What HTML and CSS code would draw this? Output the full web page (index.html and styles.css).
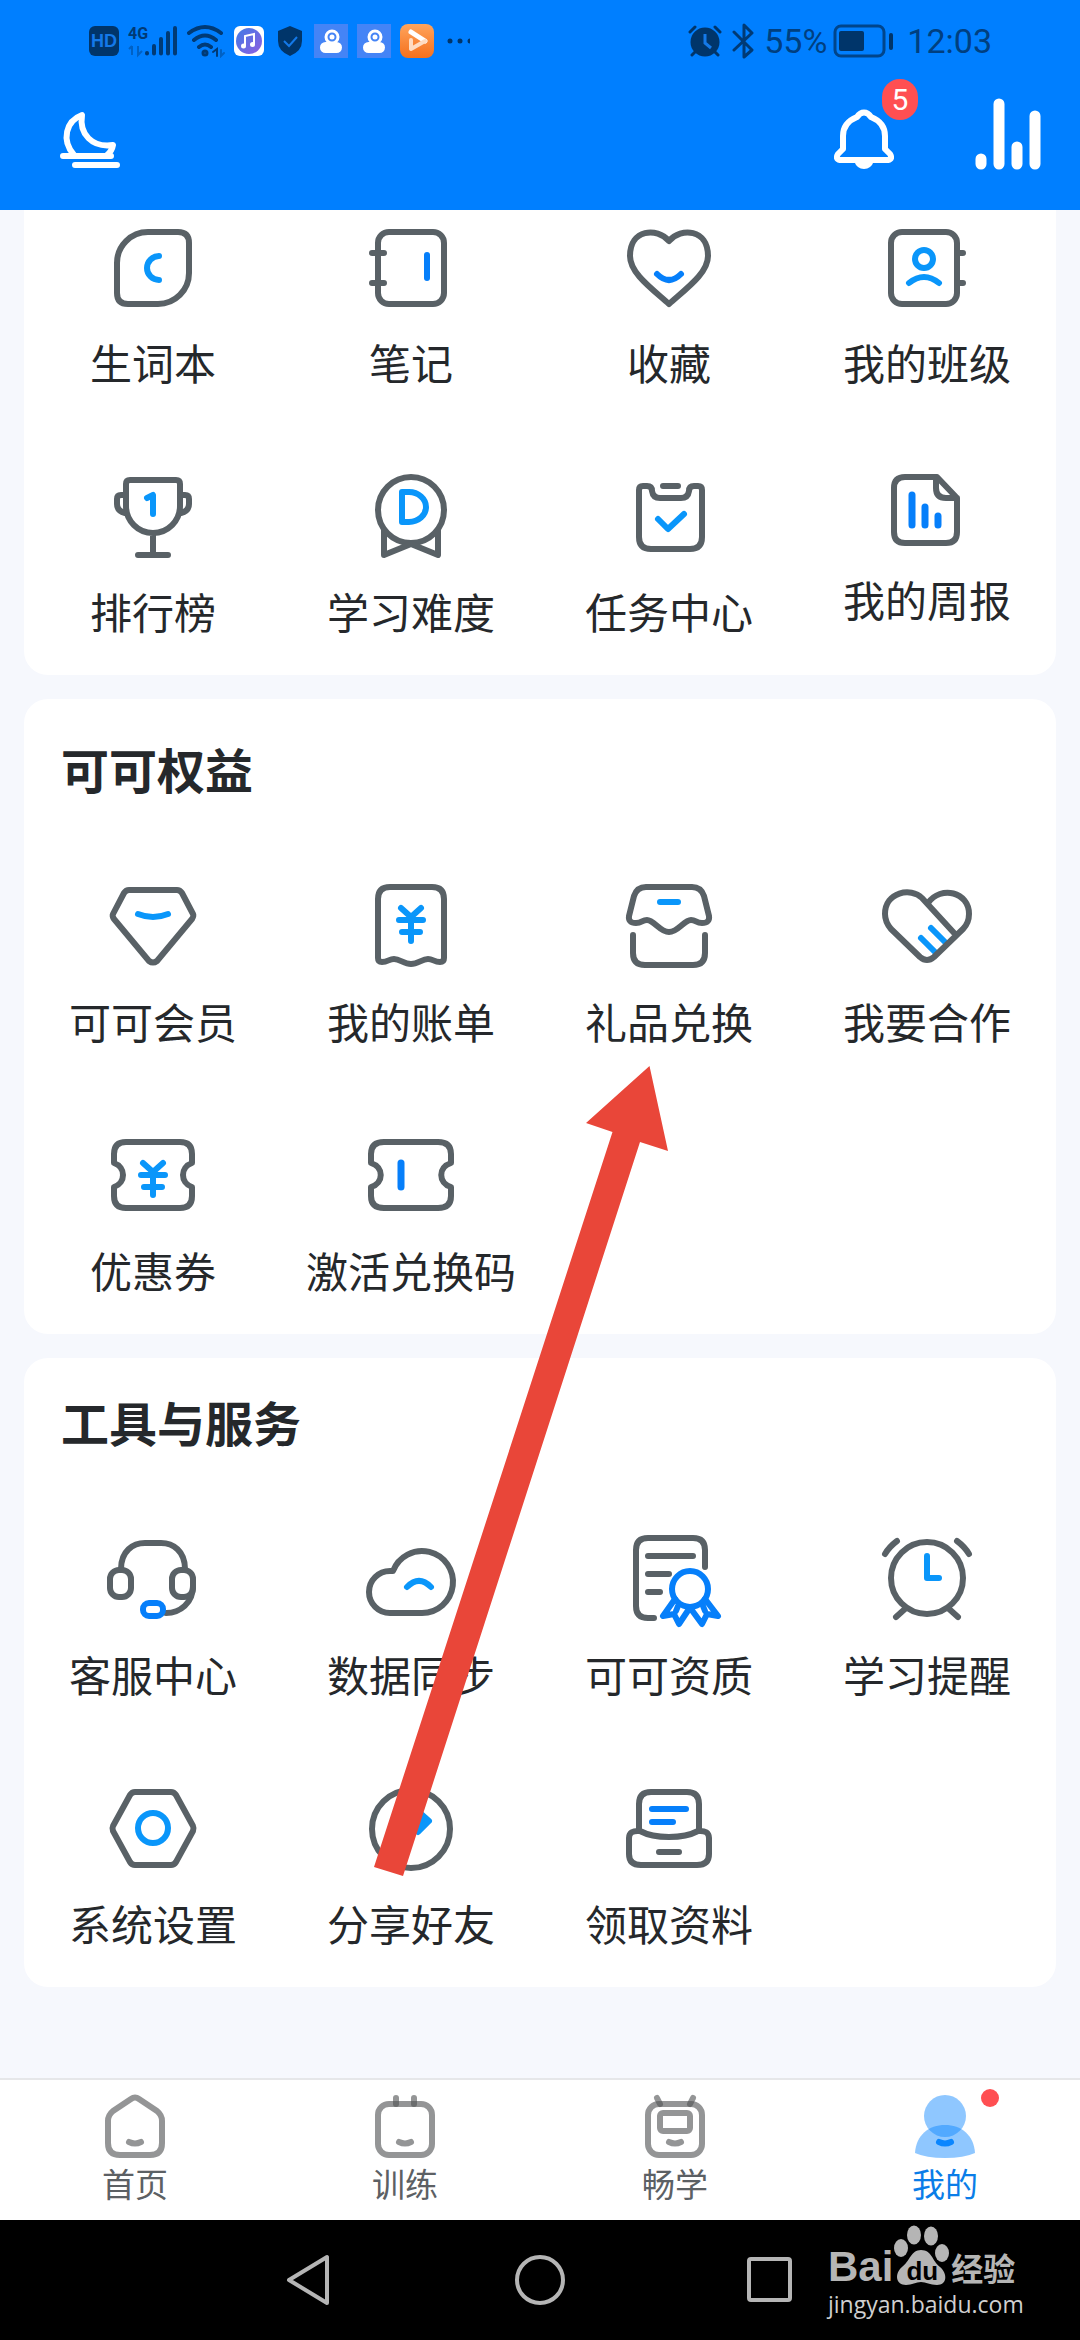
FILE: index.html
```html
<!DOCTYPE html>
<html lang="zh-CN">
<head>
<meta charset="utf-8">
<meta name="viewport" content="width=device-width, initial-scale=1">
<title>我的</title>
<link rel="stylesheet" href="styles.css">
</head>
<body>
<header class="header">
  <div class="status">
    <div class="status-left">
      <span class="hd">HD</span>
      <svg class="signal" width="50" height="34" viewBox="0 0 50 34"><text class="net" x="0" y="15">4G</text><g stroke="#003a75" stroke-width="4" stroke-linecap="round"><path d="M19 29v.5M26 22v7.500M33 15v14.500M40 9v20.500M47 4v25.500"/></g><path d="M4 22v9M1 25l3-3M10 22v9l4-4" fill="none" stroke="#0061c4" stroke-width="2"/></svg>
      <svg class="wifi" width="38" height="34" viewBox="0 0 38 34" fill="none" stroke="#003a75" stroke-width="4" stroke-linecap="round"><path d="M2 9Q18-3 34 9M7 16Q18 7 29 16M12 23Q18 18 24 23"/><circle cx="18" cy="29" r="1.500"/><path d="M26 28l4-3v7" stroke-width="2"/><path d="M34 26v6l3-3" stroke="#0061c4" stroke-width="2"/></svg>
      <svg class="music" width="30" height="30" viewBox="0 0 30 30"><defs><linearGradient id="mus" x1="0" y1="0" x2="1" y2="1"><stop offset="0" stop-color="#3f7be6"/><stop offset="1" stop-color="#8f5fe0"/></linearGradient></defs><rect width="30" height="30" rx="6" fill="#fff"/><circle cx="15" cy="15" r="13" fill="url(#mus)"/><path d="M11 20V10l9-2v10" fill="none" stroke="#fff" stroke-width="2"/><circle cx="9.500" cy="20" r="2.500" fill="#fff"/><circle cx="18.500" cy="18.500" r="2.500" fill="#fff"/></svg>
      <svg class="shield" width="26" height="32" viewBox="0 0 26 32"><path d="M13 1l12 5v10q0 10-12 15Q1 26 1 16V6z" fill="#00356a"/><path d="M7 16l5 5 8-9" fill="none" stroke="#1479e8" stroke-width="2"/></svg>
      <svg class="cam" width="34" height="34" viewBox="0 0 34 34"><rect width="34" height="34" fill="#4484f6"/><circle cx="18" cy="13" r="6" fill="none" stroke="#fff" stroke-width="3"/><circle cx="18" cy="13" r="2.500" fill="#fff"/><rect x="6" y="18" width="22" height="11" rx="5.500" fill="#fff"/></svg>
      <svg class="cam" width="34" height="34" viewBox="0 0 34 34"><rect width="34" height="34" fill="#4484f6"/><circle cx="18" cy="13" r="6" fill="none" stroke="#fff" stroke-width="3"/><circle cx="18" cy="13" r="2.500" fill="#fff"/><rect x="6" y="18" width="22" height="11" rx="5.500" fill="#fff"/></svg>
      <svg class="player" width="34" height="34" viewBox="0 0 34 34"><defs><linearGradient id="org" x1="0" y1="0" x2="0" y2="1"><stop offset="0" stop-color="#ffa45c"/><stop offset="1" stop-color="#f5701d"/></linearGradient></defs><rect width="34" height="34" rx="8" fill="url(#org)"/><path d="M11 8L25 17" stroke="#fff" stroke-width="5" stroke-linecap="round"/><path d="M25 17L11 25v-9" fill="none" stroke="#ffdcc2" stroke-width="4" stroke-linecap="round" stroke-linejoin="round"/></svg>
      <svg class="more" width="24" height="34" viewBox="0 0 24 34" fill="#00356a"><circle cx="3" cy="17" r="2.500"/><circle cx="13" cy="17" r="2.500"/><path d="M23 14.500q-2.500 0-2.500 2.500t2.500 2.500z"/></svg>
    </div>
    <div class="status-right">
      <svg width="34" height="34" viewBox="0 0 34 34"><g stroke="#00356a" stroke-width="3" stroke-linecap="round"><path d="M2 8l5-5M32 8l-5-5M4 31l5-5M30 31l-5-5"/></g><circle cx="17" cy="18" r="14.500" fill="#00356a"/><path d="M17 10v9l6 5" fill="none" stroke="#1479e8" stroke-width="3"/></svg>
      <svg class="bt" width="22" height="36" viewBox="0 0 22 36" fill="none" stroke="#003a75" stroke-width="3" stroke-linejoin="round" stroke-linecap="round"><path d="M2 9l18 18-8 7V2l8 8L2 27"/></svg>
      <span class="pct">55%</span>
      <svg class="battery" width="60" height="34" viewBox="0 0 60 34"><rect x="2" y="2" width="49" height="30" rx="6" fill="none" stroke="#00458b" stroke-width="3"/><rect x="6" y="7" width="25" height="20" rx="2" fill="#00356a"/><rect x="56" y="9" width="4" height="17" rx="2" fill="#00356a"/></svg>
      <span class="time">12:03</span>
    </div>
  </div>
  <div class="appbar">
    <button class="icon-btn" aria-label="夜间模式"><svg width="60" height="60" viewBox="0 0 60 60" fill="none" stroke="#fff" stroke-width="6" stroke-linecap="round" stroke-linejoin="round"><path d="M14 45C1 30 6 11 22 5C19 24 32 38 53 35Q52 41 47 45M3 46H51M15 55H57"/></svg></button>
    <div class="actions">
      <button class="icon-btn" aria-label="消息"><svg width="60" height="62" viewBox="0 0 60 62"><path d="M30 4.500Q26 4.500 23 9C13 13 9 20 9 28V41L4 46Q1 51 6 52H54Q59 51 56 46L51 41V28C51 20 47 13 37 9Q34 4.500 30 4.500Z" fill="none" stroke="#fff" stroke-width="6" stroke-linejoin="round"/><path d="M20 53H40Q37 61 30 61Q23 61 20 53Z" fill="#fff"/></svg><span class="badge">5</span></button>
      <button class="icon-btn" aria-label="学习数据"><svg width="66" height="72" viewBox="0 0 66 72" stroke="#fff" stroke-width="11" stroke-linecap="round"><path d="M6 61V66M24 6V66M42 49V66M60 18V66"/></svg></button>
    </div>
  </div>
</header>

<main class="content">
  <section class="card card-top">
    <div class="grid">
      <a class="tile" href="#"><svg class="icon" viewBox="0 0 96 96"><path d="M43 13H73Q84 13 84 24V54A31 31 0 0 1 53 85H23Q12 85 12 74V44A31 31 0 0 1 43 13Z"/><path class="b" d="M54 37A12 12 0 0 0 54 61"/></svg><span>生词本</span></a>
      <a class="tile" href="#"><svg class="icon" viewBox="0 0 96 96"><rect x="15" y="13" width="66" height="72" rx="11"/><path d="M9 34H21M9 64H21"/><path class="b2" d="M64 36V59"/></svg><span>笔记</span></a>
      <a class="tile" href="#"><svg class="icon" viewBox="0 0 96 96"><path d="M48 22C36 8 9 10 9 37C9 54 30 69 48 85C66 69 87 54 87 37C87 10 60 8 48 22Z"/><path class="b2" d="M36 55Q48 67 60 55"/></svg><span>收藏</span></a>
      <a class="tile" href="#"><svg class="icon" viewBox="0 0 96 96"><rect x="12" y="13" width="66" height="72" rx="11"/><path d="M80 34H84M80 64H84"/><circle class="b" cx="45" cy="40" r="9"/><path class="b" d="M30 64Q45 52 60 64"/></svg><span>我的班级</span></a>
      <a class="tile" href="#"><svg class="icon" viewBox="0 0 96 96"><path d="M25 12H71Q75 12 75 16V38A27 27 0 0 1 21 38V16Q21 12 25 12ZM21 27H16Q12 27 12 31V36Q12 43 20 45M75 27H80Q84 27 84 31V36Q84 43 76 45M48 65V87M33 87H63"/><path class="b" d="M42 30L48 27V46"/></svg><span>排行榜</span></a>
      <a class="tile" href="#"><svg class="icon" viewBox="0 0 96 96"><circle cx="48" cy="42" r="33"/><path d="M21 62V87L48 76L75 87V62"/><path class="b" d="M39 24H46A17 15 0 0 1 46 54H39Z"/></svg><span>学习难度</span></a>
      <a class="tile" href="#"><svg class="icon" viewBox="0 0 96 96"><path d="M18 22Q18 18 22 18H26Q31 18 31 23Q32 30 39 30H60Q67 30 68 23Q68 18 73 18H77Q81 18 81 22V69Q81 81 69 81H30Q18 81 18 69ZM42 18H57"/><path class="b" d="M37 51L47 61L63 46"/></svg><span>任务中心</span></a>
      <a class="tile" href="#"><svg class="icon icon-short" viewBox="0 0 96 84"><path d="M26 9H58L78 30V64Q78 75 67 75H26Q15 75 15 64V20Q15 9 26 9ZM57 9V20Q57 30 67 30H78"/><path class="b2 thick" d="M33 27V57M46 39V57M59 48V57"/></svg><span>我的周报</span></a>
    </div>
  </section>

  <section class="card">
    <h2>可可权益</h2>
    <div class="grid">
      <a class="tile" href="#"><svg class="icon" viewBox="0 0 96 96"><path d="M24 12H72Q75 12 77 15L88 36Q89 38 87 41L52 83Q48 86 44 83L9 41Q7 38 8 36L19 15Q21 12 24 12Z"/><path class="b" d="M33 36Q48 42 63 36"/></svg><span>可可会员</span></a>
      <a class="tile" href="#"><svg class="icon" viewBox="0 0 96 96"><path d="M27 9H69Q81 9 81 21V80Q81 84 77 84C71 84 70 81 65 81C59 81 55 86 48 86C41 86 37 81 31 81C26 81 25 84 19 84Q15 84 15 80V21Q15 9 27 9Z"/><path class="b" d="M38 30L48 39L58 30M48 39V63M36 42H60M39 54H57"/></svg><span>我的账单</span></a>
      <a class="tile" href="#"><svg class="icon" viewBox="0 0 96 96"><path d="M25 9H71Q80 9 83 18L88 38Q89 45 81 45C75 45 75 42 70 42C63 42 57 54 48 54C39 54 33 42 26 42C21 42 21 45 15 45Q7 45 8 38L13 18Q16 9 25 9ZM12 57V75Q12 87 24 87H72Q84 87 84 75V57"/><path class="b" d="M39 24H57"/></svg><span>礼品兑换</span></a>
      <a class="tile" href="#"><svg class="icon" viewBox="0 0 96 96"><path class="b" d="M52 50L67 65M42 60L57 75"/><path d="M76 56L43 20C32 9 6 14 6 36Q6 44 12 51L41 79Q48 85 55 79L84 51Q90 45 90 36C90 14 62 7 49 25"/></svg><span>我要合作</span></a>
      <a class="tile" href="#"><svg class="icon" viewBox="0 0 96 96"><path d="M21 15H75Q87 15 87 27V36C75 40 75 56 87 60V69Q87 81 75 81H21Q9 81 9 69V60C21 56 21 40 9 36V27Q9 15 21 15Z"/><path class="b" d="M38 36L48 45L58 36M48 45V68M36 48H60M39 60H57"/></svg><span>优惠券</span></a>
      <a class="tile" href="#"><svg class="icon" viewBox="0 0 96 96"><path d="M21 15H75Q88 15 88 27V36C75 40 75 56 88 60V69Q88 81 75 81H21Q8 81 8 69V60C21 56 21 40 8 36V27Q8 15 21 15Z"/><path class="b2 thick" d="M38 36V60"/></svg><span>激活兑换码</span></a>
    </div>
  </section>

  <section class="card card-tools">
    <h2>工具与服务</h2>
    <div class="grid">
      <a class="tile" href="#"><svg class="icon" viewBox="0 0 96 96"><path d="M16 38C16 20 28 12 40 12H56C68 12 80 20 80 38M88 55C88 72 75 82 61 82"/><rect x="5" y="39" width="21" height="27" rx="9"/><rect x="67" y="39" width="21" height="27" rx="9"/><rect class="b2" x="38" y="72" width="20" height="13" rx="6"/></svg><span>客服中心</span></a>
      <a class="tile" href="#"><svg class="icon" viewBox="0 0 96 96"><path d="M27 82A21 21 0 0 1 27 40H30A31 31 0 1 1 59 82Z"/><path class="b" d="M44 56Q56 44 68 56"/></svg><span>数据同步</span></a>
      <a class="tile" href="#"><svg class="icon" viewBox="0 0 96 96"><path d="M84 36V19Q84 7 72 7H27Q15 7 15 19V75Q15 87 27 87H33M27 25H72M27 43H48M27 61H39"/><circle class="b2" cx="69" cy="58" r="18"/><path class="b2" d="M54 68L42 85L53 83L58 93L68 78M84 68L97 85L86 83L81 93L70 78M57 75L55 80M82 75L84 80"/></svg><span>可可资质</span></a>
      <a class="tile" href="#"><svg class="icon" viewBox="0 0 96 96"><circle cx="48" cy="47" r="36"/><path d="M6 23Q10 16 18 10M78 10Q86 16 90 23M27 77L17 86M69 77L79 86"/><path class="b" d="M48 25V47H60"/></svg><span>学习提醒</span></a>
      <a class="tile" href="#"><svg class="icon" viewBox="0 0 96 96"><path d="M30 12H66Q69 12 71 15L88 46Q89 48 88 51L71 82Q69 85 66 85H30Q27 85 25 82L8 51Q7 48 8 46L25 15Q27 12 30 12Z"/><circle class="b" cx="48" cy="48" r="15"/></svg><span>系统设置</span></a>
      <a class="tile" href="#"><svg class="icon" viewBox="0 0 96 96"><circle cx="48" cy="49" r="39"/><path class="b solid" d="M57 33L66 41L55 52Z"/><path class="b" d="M57 41H46Q33 43 32 58"/></svg><span>分享好友</span></a>
      <a class="tile" href="#"><svg class="icon" viewBox="0 0 96 96"><path d="M18 50V24Q18 12 30 12H66Q78 12 78 24V50M19 51C34 59 62 59 77 51Q88 50 88 58V74Q88 85 76 85H20Q8 85 8 74V58Q8 50 19 51ZM38 72H58"/><path class="b2" d="M31 29H65M31 42H52"/></svg><span>领取资料</span></a>
    </div>
  </section>

  <svg class="arrow" width="294" height="810" viewBox="0 0 294 810" aria-hidden="true"><path d="M275.500 0L294 85L266 76L29 810L0 801L238.500 66L212 57Z" fill="#e94639"/></svg>
</main>

<nav class="tabs">
  <a class="tab" href="#"><svg class="tab-icon" viewBox="0 0 66 66"><path d="M29 7Q33 4 37 7L55 19Q60 23 60 29V51Q60 63 48 63H18Q6 63 6 51V29Q6 23 11 19Z"/><path d="M27 50Q33 53 39 50"/></svg><span>首页</span></a>
  <a class="tab" href="#"><svg class="tab-icon" viewBox="0 0 66 66"><rect x="6" y="12" width="54" height="51" rx="11"/><path d="M24 6V12"/><path d="M42 6V12"/><path d="M27 50Q33 53 39 50"/></svg><span>训练</span></a>
  <a class="tab" href="#"><svg class="tab-icon" viewBox="0 0 66 66"><rect x="6" y="12" width="54" height="51" rx="11"/><path d="M15 6L18 12"/><path d="M51 6L48 12"/><rect x="18" y="21" width="30" height="18" rx="3"/><path d="M27 50Q33 53 39 50"/></svg><span>畅学</span></a>
  <a class="tab active" href="#"><span class="tab-pic"><svg class="tab-me" width="66" height="66" viewBox="0 0 66 66"><circle cx="33" cy="24" r="21" fill="#0a86ff" fill-opacity=".46"/><path d="M3 61C4 43 17 33 33 33C49 33 62 43 63 61Q52 66 33 66Q14 66 3 61Z" fill="#0a86ff" fill-opacity=".46"/><path d="M27 50Q33 53 39 50" fill="none" stroke="#0a86ff" stroke-width="6" stroke-linecap="round"/></svg><i class="dot"></i></span><span>我的</span></a>
</nav>

<footer class="sysnav">
  <button class="sys-btn" aria-label="返回"><svg width="56" height="56" viewBox="0 0 56 56"><path d="M8 28L46 5V51Z"/></svg></button>
  <button class="sys-btn" aria-label="主屏幕"><svg width="56" height="56" viewBox="0 0 56 56"><circle cx="28" cy="28" r="23"/></svg></button>
  <button class="sys-btn" aria-label="最近任务"><svg width="56" height="56" viewBox="0 0 56 56"><rect x="6" y="7" width="41" height="41" rx="2"/></svg></button>
  <div class="watermark">
    <div class="wm-logo"><span class="wm-bai">Bai</span><span class="wm-paw"><svg width="56" height="62" viewBox="0 0 56 62" fill="#b5b5b5"><ellipse cx="7" cy="23" rx="7" ry="9"/><ellipse cx="20" cy="10" rx="7" ry="9.500"/><ellipse cx="37" cy="11" rx="7" ry="9.500"/><ellipse cx="48" cy="28" rx="7" ry="9"/><path d="M27 25C38 25 38 36 46 42C54 49 53 60 43 60C36 60 32 57 27 57C22 57 18 60 12 60C2 60 0 49 8 42C16 36 17 25 27 25Z"/></svg><b class="wm-du">du</b></span><span class="wm-cn">经验</span></div>
    <div class="wm-url">jingyan.baidu.com</div>
  </div>
</footer>
</body>
</html>
```

FILE: styles.css
```css
* { box-sizing: border-box; }

body {
  margin: 0;
  min-height: 100vh;
  display: flex;
  flex-direction: column;
  background: #f6f8fd;
  color: #25282b;
  font-family: "Noto Sans CJK SC", sans-serif;
}

a { color: inherit; text-decoration: none; }
button { padding: 0; border: 0; background: none; font: inherit; color: inherit; }
svg { display: block; flex: none; }

/* Header */
.header { background: #007fff; }

.status {
  height: 80px;
  padding: 2px 88px 0 89px;
  display: flex;
  align-items: center;
  justify-content: space-between;
  color: #003f80;
  font: 34px/40px Roboto, sans-serif;
}
.status-left, .status-right { display: flex; align-items: center; }
.status-left { gap: 9px; }
.status-right { gap: 10px; }
.hd {
  width: 30px;
  height: 30px;
  border-radius: 6px;
  background: #00356a;
  color: #1479e8;
  font: bold 18px/30px "Liberation Sans", sans-serif;
  text-align: center;
}
.net { font: bold 16px Roboto, sans-serif; fill: #003a75; }
.shield { margin: 0 2px 0 4px; }
.battery { margin-left: -4px; }
.more { margin-left: 4px; }
.time { margin-left: 4px; }
.pct, .time { display: block; }

.appbar {
  height: 130px;
  padding: 0 39px 40px 60px;
  display: flex;
  align-items: flex-end;
  justify-content: space-between;
}
.actions { display: flex; align-items: flex-end; gap: 81px; }
.icon-btn { position: relative; display: block; }
.badge {
  position: absolute;
  left: 48px;
  top: -29px;
  width: 36px;
  height: 41px;
  border-radius: 18px;
  background: #ff4f52;
  color: #fff;
  font: 30px/42px Roboto, sans-serif;
  text-align: center;
}

/* Cards */
.content {
  position: relative;
  flex: 1;
  display: flex;
  flex-direction: column;
  gap: 24px;
  padding: 0 24px 90px;
}
.card {
  padding: 37px 0 34px;
  border-radius: 24px;
  background: #fff;
}
.card-top { padding-top: 9px; border-radius: 0 0 24px 24px; }
.card-tools { padding-top: 31px; }
.card h2 {
  margin: 0 0 78px;
  padding-left: 37px;
  font-size: 48px;
  line-height: 64px;
  font-weight: 700;
}
.grid {
  display: grid;
  grid-template-columns: repeat(4, 1fr);
  row-gap: 76px;
  align-items: start;
}
.tile {
  display: flex;
  flex-direction: column;
  align-items: center;
  gap: 17px;
  font-size: 42px;
  line-height: 60px;
}
.icon {
  width: 96px;
  height: 96px;
  overflow: visible;
  fill: none;
  stroke: #596166;
  stroke-width: 6;
  stroke-linecap: round;
  stroke-linejoin: round;
}
.icon-short { height: 84px; }
.b { stroke: #0a96fa; }
.b2 { stroke: #067ffa; }
.thick { stroke-width: 7; }
.solid { fill: #0a96fa; }

.arrow { position: absolute; left: 374px; top: 856px; }

/* Tabs */
.tabs {
  display: grid;
  grid-template-columns: repeat(4, 1fr);
  padding: 12px 0 17px;
  border-top: 2px solid #e6e7e9;
  background: #fff;
}
.tab {
  display: flex;
  flex-direction: column;
  align-items: center;
  gap: 5px;
  color: #5c6064;
  font-size: 33px;
  line-height: 40px;
}
.active { color: #0a7de8; }
.tab-icon {
  width: 66px;
  height: 66px;
  fill: none;
  stroke: rgba(82, 84, 86, .62);
  stroke-width: 6;
  stroke-linecap: round;
  stroke-linejoin: round;
}
.tab-pic { position: relative; }
.dot {
  position: absolute;
  left: 69px;
  top: -3px;
  width: 18px;
  height: 18px;
  border-radius: 50%;
  background: #ff4f52;
}

/* System navigation */
.sysnav {
  position: relative;
  height: 120px;
  display: flex;
  align-items: center;
  justify-content: center;
  gap: 175px;
  background: #000;
}
.sys-btn svg {
  fill: none;
  stroke: #b5b5b5;
  stroke-width: 4;
  stroke-linejoin: round;
}
.watermark {
  position: absolute;
  right: 60px;
  top: 5px;
  width: 192px;
  color: #b5b5b5;
}
.wm-logo { display: flex; align-items: flex-end; gap: 1px; height: 62px; }
.wm-bai { font: bold 42px/40px "Liberation Sans", sans-serif; }
.wm-paw { position: relative; }
.wm-du {
  position: absolute;
  left: 0;
  right: 0;
  bottom: 0;
  color: #000;
  font: bold 26px/32px "Liberation Sans", sans-serif;
  text-align: center;
}
.wm-cn { font-size: 32px; line-height: 40px; font-weight: 700; }
.wm-url { font: 23px/34px "Open Sans", sans-serif; color: #d0d0d0; }
```
